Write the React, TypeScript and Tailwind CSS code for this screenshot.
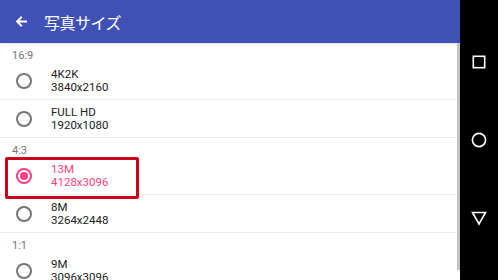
import React from 'react';

type Option = { name: string; size: string; selected?: boolean };
type Section = { label: string; options: Option[] };

const SECTIONS: Section[] = [
  {
    label: '16:9',
    options: [
      { name: '4K2K', size: '3840x2160' },
      { name: 'FULL HD', size: '1920x1080' },
    ],
  },
  {
    label: '4:3',
    options: [
      { name: '13M', size: '4128x3096', selected: true },
      { name: '8M', size: '3264x2448' },
    ],
  },
  {
    label: '1:1',
    options: [{ name: '9M', size: '3096x3096' }],
  },
];

const Radio: React.FC<{ checked?: boolean }> = ({ checked }) => (
  <div
    className={`w-4 h-4 rounded-full border-2 flex items-center justify-center shrink-0 ${
      checked ? 'border-[#ff4081]' : 'border-[#757575]'
    }`}
  >
    {checked && <div className="w-2 h-2 rounded-full bg-[#ff4081]"></div>}
  </div>
);

const OptionRow: React.FC<{ option: Option }> = ({ option }) => (
  <div className="h-[38px] flex items-center border-b border-[#eeeeee] shrink-0">
    <div className="w-[51px] pl-4 flex items-center">
      <Radio checked={option.selected} />
    </div>
    <div
      className={`text-[11.5px] leading-[13px] ${
        option.selected ? 'text-[#ff4081]' : 'text-[#212121]'
      }`}
    >
      <p>{option.name}</p>
      <p>{option.size}</p>
    </div>
  </div>
);

export default function App() {
  return (
    <div className="w-[498px] h-[280px] flex overflow-hidden bg-white font-['Roboto','Noto_Sans_CJK_JP',sans-serif]">
      <div className="flex-1 flex flex-col min-w-0">
        {/* App bar */}
        <div className="h-[43px] bg-[#3f51b5] flex items-center shrink-0 shadow-sm">
          <svg className="ml-[16px] w-[11px] h-[11px]" viewBox="0 0 11 11" fill="none" stroke="white" strokeWidth={2}>
            <path d="M11 5.5H1.2M5.8 0.8L1.2 5.5L5.8 10.2" />
          </svg>
          <span className="ml-[17px] text-white text-[16px] leading-none tracking-[-0.5px] font-['Noto_Sans_CJK_JP',sans-serif]">
            写真サイズ
          </span>
        </div>

        {/* List + scrollbar */}
        <div className="flex-1 flex min-h-0">
          <div className="flex-1 relative overflow-hidden">
            {SECTIONS.map(section => (
              <div key={section.label}>
                <div className="h-[19px] pl-3 flex items-end text-[11px] leading-[13px] text-[#757575]">
                  {section.label}
                </div>
                {section.options.map(option => (
                  <OptionRow key={option.name} option={option} />
                ))}
              </div>
            ))}
            {/* highlight annotation */}
            <div className="absolute left-[5px] top-[114px] w-[134px] h-[42px] border-[3px] border-[#d0021b] rounded-[2px]"></div>
          </div>
          <div className="w-[3px] h-[227px] bg-[#c2c2c2]"></div>
        </div>
      </div>

      {/* Navigation bar */}
      <div className="w-[38px] bg-black flex flex-col items-center pt-[54px] gap-[62px] shrink-0">
        <svg className="w-4 h-4" viewBox="0 0 16 16" fill="none" stroke="white" strokeWidth={1.6}>
          <rect x="2.3" y="2.3" width="11.4" height="11.4" />
        </svg>
        <svg className="w-4 h-4" viewBox="0 0 16 16" fill="none" stroke="white" strokeWidth={1.6}>
          <circle cx="8" cy="8" r="6.6" />
        </svg>
        <svg className="w-4 h-4" viewBox="0 0 16 16" fill="none" stroke="white" strokeWidth={1.6} strokeLinejoin="miter">
          <path d="M1.5 2.5H14.5L8 14Z" />
        </svg>
      </div>
    </div>
  );
}
